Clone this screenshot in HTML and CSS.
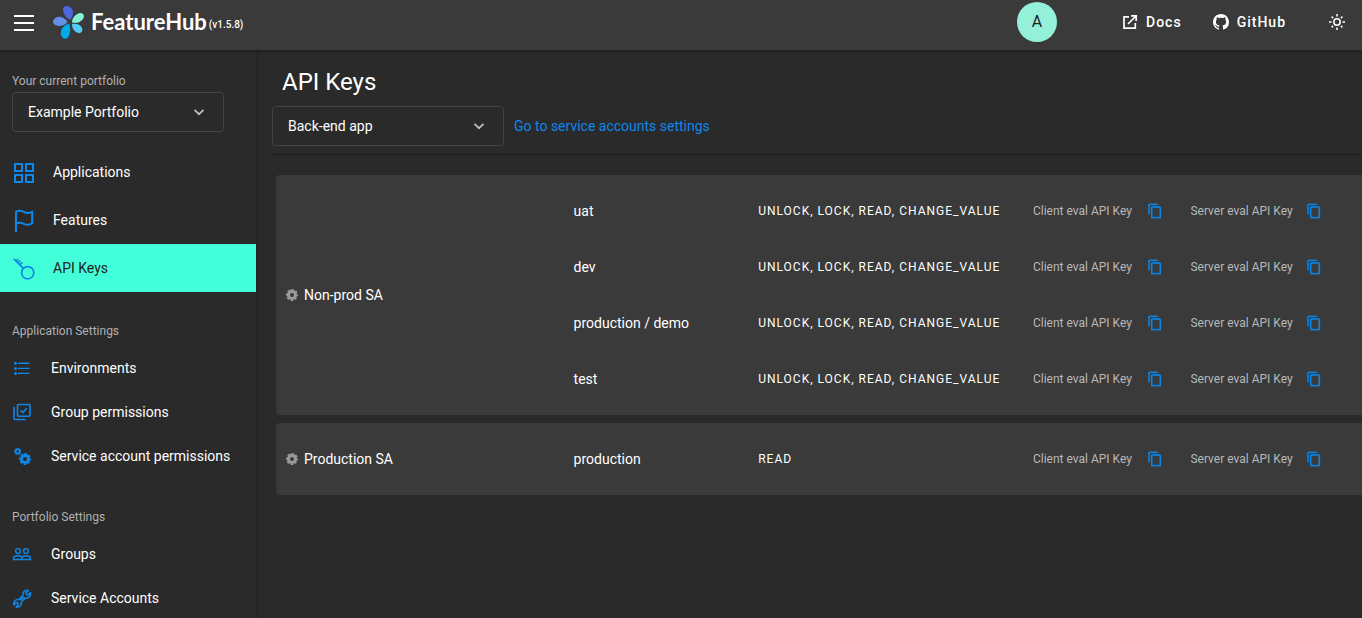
FILE: index.html
```html
<!DOCTYPE html>
<html lang="en">
<head>
<meta charset="utf-8">
<title>FeatureHub - API Keys</title>
<link rel="stylesheet" href="styles.css">
</head>
<body>
<svg class="sprite" aria-hidden="true">
  <symbol id="copy" viewBox="0 0 24 24"><path fill="currentColor" stroke="currentColor" stroke-width=".4" d="M16 1H4c-1.1 0-2 .9-2 2v14h2V3h12V1zm3 4H8c-1.1 0-2 .9-2 2v14c0 1.1.9 2 2 2h11c1.1 0 2-.9 2-2V7c0-1.1-.9-2-2-2zm0 16H8V7h11v14z"/></symbol>
  <symbol id="chevron" viewBox="0 0 12 12"><path fill="none" stroke="currentColor" stroke-width="1.8" d="M1.500 3.800 6 8.200l4.500-4.400"/></symbol>
  <symbol id="gear" viewBox="0 0 12 12"><g fill="none" stroke="currentColor"><circle cx="6" cy="6" r="3.500" stroke-width="3"/><circle cx="6" cy="6" r="5.300" stroke-width="1.400" stroke-dasharray="2.560 1.600" stroke-dashoffset="1.280"/></g></symbol>
</svg>

<header class="topbar">
  <button class="icon-button menu" aria-label="Menu">
    <svg width="20" height="16" viewBox="0 0 20 16" fill="currentColor"><path d="M0 0h20v2H0zM0 7h20v2H0zM0 14h20v2H0z"/></svg>
  </button>
  <a class="brand" href="#">
    <svg width="34" height="36" viewBox="0 0 34 36" aria-hidden="true">
      <path fill="#4b67e0" d="M18 16C13 13 11 9 11 5c0-3 4-4 7-2 4 3 4 8 0 13z"/>
      <path fill="#6390e6" d="M15.500 18C12 22.500 6 23 2.500 20.500 0 18.500 1 15.500 4 13.500 8 11.500 13 13.500 15.500 18z"/>
      <path fill="#85f0d8" d="M20 18.500c0-5 4-9 8.500-9.500 3 0 4.500 3 2.500 6-2.500 3.500-7 4.500-11 3.500z"/>
      <path fill="#52cdf2" d="M20 20c5-1 9 .8 10.200 4.500.8 3.500-1.500 5-4.400 4.200C22 27.500 20 24.500 20 20z"/>
      <path fill="#00a9e8" d="M17 19.500c2 5 1.500 10.500-1 14-2.500 2.500-6 1-7-2.500-1-5 2-10 8-11.500z"/>
    </svg>
    <span class="wordmark">FeatureHub</span>
    <span class="version">(v1.5.8)</span>
  </a>
  <button class="avatar" aria-label="Account">A</button>
  <nav class="links">
    <a class="link" href="#">
      <svg width="16" height="16" viewBox="0 0 16 16" fill="none" stroke="currentColor" stroke-width="1.700"><path d="M7 2.800H2v11.400h11.300V9M9 1.800h5.200V7M14 2 6 10"/></svg>
      Docs</a>
    <a class="link github" href="#">
      <svg width="16" height="16" viewBox="0 0 16 16" fill="currentColor"><path d="M8 0C3.580 0 0 3.580 0 8c0 3.540 2.290 6.530 5.470 7.590.4.070.55-.17.55-.38 0-.19-.01-.82-.01-1.490-2.010.37-2.530-.49-2.690-.94-.09-.23-.48-.94-.82-1.130-.28-.15-.68-.52-.01-.53.63-.01 1.080.58 1.230.82.72 1.210 1.870.87 2.330.66.07-.52.28-.87.51-1.070-1.780-.2-3.640-.89-3.640-3.950 0-.87.31-1.590.82-2.150-.08-.2-.36-1.020.08-2.120 0 0 .67-.21 2.200.82.64-.18 1.320-.27 2-.27s1.360.09 2 .27c1.530-1.040 2.200-.82 2.200-.82.44 1.100.16 1.920.08 2.120.51.56.82 1.270.82 2.150 0 3.070-1.870 3.750-3.650 3.950.29.25.54.73.54 1.480 0 1.070-.01 1.930-.01 2.200 0 .21.15.46.55.38A8.010 8.010 0 0 0 16 8c0-4.420-3.580-8-8-8z"/></svg>
      GitHub</a>
  </nav>
  <button class="icon-button theme" aria-label="Toggle theme">
    <svg width="16" height="16" viewBox="0 0 16 16" fill="none" stroke="currentColor" stroke-width="1.500"><circle cx="8" cy="8" r="3.200"/><path d="M8 0v2.500M8 13.500V16M0 8h2.500M13.500 8H16M2.600 2.600l1.500 1.500M11.900 11.900l1.500 1.500M13.400 2.600l-1.500 1.500M4.100 11.900l-1.500 1.500"/></svg>
  </button>
</header>

<div class="layout">
  <aside class="sidebar">
    <label class="caption" for="portfolio">Your current portfolio</label>
    <div class="select portfolio">
      <select id="portfolio"><option>Example Portfolio</option></select>
      <svg class="arrow" width="12" height="12"><use href="#chevron"/></svg>
    </div>
    <nav class="nav">
      <a class="item" href="#"><svg width="24" height="24" viewBox="0 0 24 24" fill="none" stroke="currentColor" stroke-width="2"><path d="M3 4h7v7H3zM14 4h7v7h-7zM3 15h7v7H3zM14 15h7v7h-7z"/></svg>Applications</a>
      <a class="item" href="#"><svg width="24" height="24" viewBox="0 0 24 24" fill="none" stroke="currentColor" stroke-width="2"><path d="M4 24V4.500C4 3 6 2.800 8 2.800c3 0 4.500 2.200 7.500 2.200 2 0 3.200-.3 4.700-1v11.500c-1.500 1-3 1.300-4.700 1.300-3 0-4.500-2-7.500-2-1.800 0-3 .2-4 .8"/></svg>Features</a>
      <a class="item active" href="#" aria-current="page"><svg width="24" height="24" viewBox="0 0 24 24" fill="none" stroke="currentColor" stroke-width="1.700"><circle cx="15.700" cy="16.700" r="6.100"/><path d="M11.400 12.400 1.800 2.800M4 5.500l2-2.500M7.800 9l2.500-2.700M5.800 7.200 8.200 4.500"/></svg>API Keys</a>
    </nav>
    <h2 class="caption">Application Settings</h2>
    <nav class="nav compact">
      <a class="item" href="#"><svg width="20" height="20" viewBox="0 0 20 20" fill="currentColor"><circle cx="3.500" cy="5.300" r="1.500"/><circle cx="3.500" cy="10.400" r="1.500"/><circle cx="3.500" cy="15.400" r="1.500"/><path d="M6 4.600h11.500v1.400H6zM6 9.700h11.500v1.400H6zM6 14.700h11.500v1.400H6z"/></svg>Environments</a>
      <a class="item" href="#"><svg width="20" height="20" viewBox="0 0 20 20" fill="none" stroke="currentColor" stroke-width="1.600"><rect x="5.500" y="2.500" width="12.500" height="11.700" rx="1"/><path d="M2 5v11.500q0 1 1 1h10.500M8.500 8.300l2.300 2.200 4-4.300"/></svg>Group permissions</a>
      <a class="item" href="#"><svg width="20" height="20" viewBox="0 0 20 20"><use href="#gear" x="2" y="1.700" width="7.500" height="7.500"/><use href="#gear" x="7" y="7" width="12" height="12"/></svg>Service account permissions</a>
    </nav>
    <h2 class="caption">Portfolio Settings</h2>
    <nav class="nav compact">
      <a class="item" href="#"><svg width="20" height="20" viewBox="0 0 20 20" fill="none" stroke="currentColor" stroke-width="1.400"><circle cx="6" cy="7" r="2.400"/><circle cx="14" cy="7" r="2.400"/><path d="M1.500 15.500V14c0-1.600 2-2.300 4.500-2.300s4 .7 4 2.300c0-1.600 1.500-2.300 4-2.300s4.500.7 4.500 2.300v1.500zM10 14v1.500"/></svg>Groups</a>
      <a class="item" href="#"><svg width="20" height="20" viewBox="0 0 20 20" fill="none" stroke="currentColor" stroke-width="1.500" stroke-linejoin="round"><path d="M16.300 2.400 14 4.800l.4 1.700 1.700.4 2.300-2.300c.9 3.200-1.700 6-5 5.300L9.300 14c.7 3.300-2.100 5.900-5.300 5l2.300-2.300-.4-1.700-1.700-.4-2.300 2.300c-.9-3.200 1.700-6 5-5.300L11 7.500c-.7-3.300 2.100-5.900 5.300-5.100zM8.500 12.300l3.300-3.300"/></svg>Service Accounts</a>
    </nav>
  </aside>

  <main class="main">
    <h1 class="title">API Keys</h1>
    <div class="toolbar">
      <div class="select application">
        <select aria-label="Application"><option>Back-end app</option></select>
        <svg class="arrow" width="12" height="12"><use href="#chevron"/></svg>
      </div>
      <a class="settings-link" href="#">Go to service accounts settings</a>
    </div>
    <div class="cards">
      <table class="card">
        <colgroup><col class="col-account"><col class="col-env"><col class="col-perms"><col class="col-key"><col></colgroup>
        <tbody>
          <tr>
            <th rowspan="4" scope="rowgroup"><span class="account"><svg width="12" height="12"><use href="#gear"/></svg>Non-prod SA</span></th>
            <td>uat</td><td class="perms">UNLOCK, LOCK, READ, CHANGE_VALUE</td>
            <td><span class="key client">Client eval API Key<button class="copy" aria-label="Copy client key"><svg width="16" height="16"><use href="#copy"/></svg></button></span></td>
            <td><span class="key">Server eval API Key<button class="copy" aria-label="Copy server key"><svg width="16" height="16"><use href="#copy"/></svg></button></span></td>
          </tr>
          <tr>
            <td>dev</td><td class="perms">UNLOCK, LOCK, READ, CHANGE_VALUE</td>
            <td><span class="key client">Client eval API Key<button class="copy" aria-label="Copy client key"><svg width="16" height="16"><use href="#copy"/></svg></button></span></td>
            <td><span class="key">Server eval API Key<button class="copy" aria-label="Copy server key"><svg width="16" height="16"><use href="#copy"/></svg></button></span></td>
          </tr>
          <tr>
            <td>production / demo</td><td class="perms">UNLOCK, LOCK, READ, CHANGE_VALUE</td>
            <td><span class="key client">Client eval API Key<button class="copy" aria-label="Copy client key"><svg width="16" height="16"><use href="#copy"/></svg></button></span></td>
            <td><span class="key">Server eval API Key<button class="copy" aria-label="Copy server key"><svg width="16" height="16"><use href="#copy"/></svg></button></span></td>
          </tr>
          <tr>
            <td>test</td><td class="perms">UNLOCK, LOCK, READ, CHANGE_VALUE</td>
            <td><span class="key client">Client eval API Key<button class="copy" aria-label="Copy client key"><svg width="16" height="16"><use href="#copy"/></svg></button></span></td>
            <td><span class="key">Server eval API Key<button class="copy" aria-label="Copy server key"><svg width="16" height="16"><use href="#copy"/></svg></button></span></td>
          </tr>
        </tbody>
      </table>
      <table class="card">
        <colgroup><col class="col-account"><col class="col-env"><col class="col-perms"><col class="col-key"><col></colgroup>
        <tbody>
          <tr>
            <th scope="row"><span class="account"><svg width="12" height="12"><use href="#gear"/></svg>Production SA</span></th>
            <td>production</td><td class="perms">READ</td>
            <td><span class="key client">Client eval API Key<button class="copy" aria-label="Copy client key"><svg width="16" height="16"><use href="#copy"/></svg></button></span></td>
            <td><span class="key">Server eval API Key<button class="copy" aria-label="Copy server key"><svg width="16" height="16"><use href="#copy"/></svg></button></span></td>
          </tr>
        </tbody>
      </table>
    </div>
  </main>
</div>
</body>
</html>
```

FILE: styles.css
```css
* { box-sizing: border-box; }

body {
  margin: 0;
  height: 100vh;
  display: flex;
  flex-direction: column;
  overflow: hidden;
  background: #2a2a2a;
  color: #fff;
  font: 14px/20px Roboto, sans-serif;
}

a { color: inherit; text-decoration: none; }
svg { display: block; flex: none; }
.sprite { position: absolute; width: 0; height: 0; }

button {
  padding: 0;
  border: 0;
  background: none;
  color: inherit;
  font: inherit;
  cursor: pointer;
}

/* Top bar */
.topbar {
  display: flex;
  flex: none;
  align-items: center;
  padding: 2px 17px 8px 14px;
  background: #3a3a3a;
  box-shadow: 0 1px 4px rgba(0, 0, 0, 0.4);
  z-index: 1;
}

.menu { padding-top: 2px; }

.brand {
  display: flex;
  align-items: center;
  margin-left: 18px;
  margin-right: auto;
}

.wordmark {
  margin-left: 5px;
  font: 700 22px/24px Lato, sans-serif;
}

.version {
  margin-left: 2px;
  padding-top: 6px;
  font-size: 10px;
  font-weight: 500;
}

.avatar {
  width: 40px;
  height: 40px;
  border-radius: 50%;
  background: #95f0da;
  color: #222;
  font-size: 16px;
}

.links {
  display: flex;
  gap: 31px;
  margin: 0 43px 0 65px;
}

.link {
  display: flex;
  align-items: center;
  gap: 8px;
  font-weight: 500;
  letter-spacing: 1px;
}

/* Layout */
.layout {
  display: flex;
  flex: 1;
  min-height: 0;
}

.sidebar {
  flex: none;
  width: 256px;
  padding-top: 23px;
  overflow: hidden;
  box-shadow: 1px 0 3px rgba(0, 0, 0, 0.2);
}

.caption {
  display: block;
  margin: 0 12px 7px;
  color: #b0b0b0;
  font-size: 12px;
  font-weight: 400;
  line-height: 16px;
}

label.caption { margin-bottom: 3px; }

.select {
  position: relative;
  height: 40px;
}

.select select {
  width: 100%;
  height: 100%;
  padding: 0 36px 0 15px;
  appearance: none;
  border: 1px solid #444;
  border-radius: 4px;
  background: transparent;
  color: inherit;
  font: inherit;
}

.select option { background: #3a3a3a; }

.arrow {
  position: absolute;
  right: 19px;
  top: 14px;
  color: #bdbdbd;
  pointer-events: none;
}

.portfolio { margin: 0 32px 16px 12px; }
.application { width: 232px; }

.nav { margin-bottom: 31px; }

.item {
  display: flex;
  align-items: center;
  gap: 17px;
  height: 48px;
  padding-left: 12px;
}

.item svg { color: #0d87ea; }
.compact .item { height: 44px; gap: 19px; }
.active { background: #43ffd9; color: #222; }

/* Content */
.main {
  flex: 1;
  min-width: 0;
  padding: 16px 0 0 16px;
}

.title {
  margin: 0 10px 8px;
  font-size: 24px;
  font-weight: 400;
  line-height: 32px;
}

.toolbar {
  display: flex;
  align-items: center;
  gap: 10px;
  padding-bottom: 8px;
  border-bottom: 1px solid #1c1c1c;
}

.settings-link { color: #0d87ea; }

.cards {
  display: flex;
  flex-direction: column;
  gap: 8px;
  padding: 20px 0 0 4px;
}

.card {
  width: 100%;
  table-layout: fixed;
  border-spacing: 0;
  border-radius: 4px 0 0 4px;
  background: #3a3a3a;
  border-top: 8px solid #3a3a3a;
  border-bottom: 8px solid #3a3a3a;
}

.col-account { width: 27.4%; }
.col-env { width: 17%; }
.col-perms { width: 25.3%; }
.col-key { width: 14.5%; }

td, th {
  height: 56px;
  padding: 0;
  text-align: left;
  font-weight: 400;
}

th { padding-left: 10px; }

.account {
  display: flex;
  align-items: center;
  gap: 6px;
}

.account svg { color: #9a9a9a; }

.perms {
  font-size: 12px;
  letter-spacing: 1px;
}

.key {
  display: flex;
  align-items: center;
  gap: 13px;
  color: #b8b8b8;
  font-size: 12px;
}

.client { gap: 15px; }

.copy { color: #0d87ea; }
```
